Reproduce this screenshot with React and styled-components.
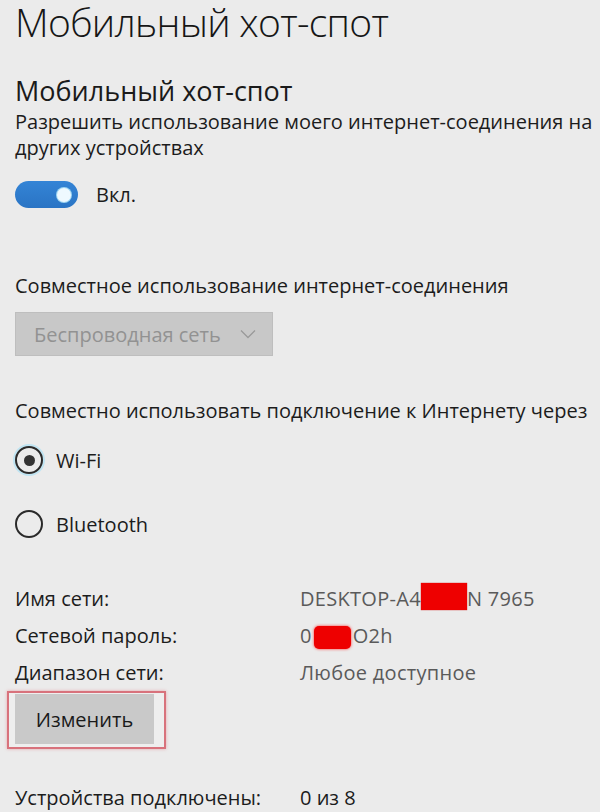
import React from "react";
import styled, { createGlobalStyle } from "styled-components";

const Global = createGlobalStyle`
  html, body { margin: 0; padding: 0; background: #ebebeb; }
  body { font-family: "Open Sans", "Noto Sans", sans-serif; color: #1c1c1c; }
`;

const Page = styled.div`
  width: 600px;
  height: 812px;
  overflow: hidden;
  background: #ebebeb;
  padding: 0 0 0 15px;
  box-sizing: border-box;
  display: flex;
  flex-direction: column;
`;

const Title = styled.h1`
  margin: 2px 0 0;
  font-weight: 300;
  font-size: 39px;
  line-height: 40px;
  letter-spacing: -0.7px;
  color: #161616;
  white-space: nowrap;
`;

const Subtitle = styled.h2`
  margin: 31px 0 0;
  font-weight: 400;
  font-size: 27px;
  line-height: 36px;
  color: #1a1a1a;
  white-space: nowrap;
`;

const Text = styled.p`
  margin: ${(p) => p.$mt || 0}px 0 0;
  font-size: 20px;
  line-height: 26px;
  color: #1c1c1c;
  white-space: ${(p) => (p.$wrap ? "normal" : "nowrap")};
  padding-right: ${(p) => (p.$wrap ? "2px" : "0")};
`;

const ToggleRow = styled.div`
  margin-top: 20px;
  display: flex;
  align-items: center;
  gap: 18px;
  height: 27px;
`;

const Track = styled.div`
  width: 63px;
  height: 27px;
  border-radius: 14px;
  background: linear-gradient(#3484d6, #2a74c4);
  display: flex;
  align-items: center;
  justify-content: flex-end;
  padding-right: 7px;
  box-sizing: border-box;
`;

const Knob = styled.span`
  width: 14px;
  height: 14px;
  border-radius: 50%;
  background: #eef9ff;
  box-shadow: 0 0 0 1px #9fd6f2;
`;

const Select = styled.div`
  margin-top: 13px;
  width: 258px;
  height: 44px;
  box-sizing: border-box;
  background: #c8c8c8;
  border: 1px solid #bebebe;
  display: flex;
  align-items: center;
  justify-content: space-between;
  padding: 0 16px 0 18px;
  font-size: 20px;
  color: #929292;
`;

const RadioRow = styled.div`
  margin-top: ${(p) => p.$mt}px;
  display: flex;
  align-items: center;
  gap: 13px;
  height: 28px;
  font-size: 20px;
  color: #1c1c1c;
`;

const RadioCircle = styled.span`
  width: 28px;
  height: 28px;
  box-sizing: border-box;
  border-radius: 50%;
  border: 2px solid #2a2a2a;
  display: flex;
  align-items: center;
  justify-content: center;
  box-shadow: ${(p) => (p.$checked ? "0 0 0 2px #bfe4f2" : "none")};
  &::after {
    content: "";
    display: ${(p) => (p.$checked ? "block" : "none")};
    width: 11px;
    height: 11px;
    border-radius: 50%;
    background: #333;
  }
`;

const InfoGrid = styled.div`
  margin-top: 42px;
  display: grid;
  grid-template-columns: 285px auto;
  font-size: 20px;
  line-height: 37px;
`;

const Label = styled.span`
  color: #1c1c1c;
  white-space: nowrap;
`;

const Value = styled.span`
  color: #5a5a5a;
  white-space: nowrap;
  display: flex;
  align-items: center;
  letter-spacing: 0.3px;
`;

const Redact = styled.span`
  display: inline-block;
  width: ${(p) => p.$w}px;
  height: ${(p) => p.$h}px;
  background: #ee0000;
  border-radius: ${(p) => (p.$soft ? "5px" : "0")};
  box-shadow: ${(p) => (p.$soft ? "0 0 3px #ff3030" : "0 0 1px #c00")};
  margin: ${(p) => p.$dy || 0}px ${(p) => p.$mx || 0}px 0;
`;

const Highlight = styled.div`
  margin: 0 0 0 -8px;
  width: 159px;
  height: 58px;
  box-sizing: border-box;
  border: 2px solid #d8727c;
  box-shadow: 0 0 3px rgba(230, 120, 130, 0.6);
  padding: 1px 10px 3px 6px;
  background: #eeeeee;
`;

const Button = styled.div`
  height: 100%;
  background: #c9c9c9;
  display: flex;
  align-items: center;
  justify-content: center;
  font-size: 20px;
  color: #1a1a1a;
`;

const Footer = styled.div`
  margin-top: 36px;
  display: grid;
  grid-template-columns: 285px auto;
  font-size: 20px;
  line-height: 26px;
  color: #1c1c1c;
  white-space: nowrap;
`;

const Chevron = () => (
  <svg width="16" height="10" viewBox="0 0 16 10" fill="none">
    <path d="M1 1.5 L8 8.5 L15 1.5" stroke="#9a9a9a" strokeWidth="1.3" />
  </svg>
);

export default function App() {
  return (
    <Page>
      <Global />
      <Title>Мобильный хот-спот</Title>
      <Subtitle>Мобильный хот-спот</Subtitle>
      <Text $wrap>Разрешить использование моего интернет-соединения на других устройствах</Text>
      <ToggleRow>
        <Track>
          <Knob />
        </Track>
        <Text>Вкл.</Text>
      </ToggleRow>
      <Text $mt={65}>Совместное использование интернет-соединения</Text>
      <Select>
        <span>Беспроводная сеть</span>
        <Chevron />
      </Select>
      <Text $mt={42}>Совместно использовать подключение к Интернету через</Text>
      <RadioRow $mt={22}>
        <RadioCircle $checked />
        <span>Wi-Fi</span>
      </RadioRow>
      <RadioRow $mt={36}>
        <RadioCircle />
        <span>Bluetooth</span>
      </RadioRow>
      <InfoGrid>
        <Label>Имя сети:</Label>
        <Value>
          DESKTOP-A4
          <Redact $w={46} $h={27} $dy={-4} />N 7965
        </Value>
        <Label>Сетевой пароль:</Label>
        <Value>
          0<Redact $w={37} $h={23} $dy={4} $mx={2} $soft />O2h
        </Value>
        <Label>Диапазон сети:</Label>
        <Value>Любое доступное</Value>
      </InfoGrid>
      <Highlight>
        <Button>Изменить</Button>
      </Highlight>
      <Footer>
        <span>Устройства подключены:</span>
        <span>0 из 8</span>
      </Footer>
    </Page>
  );
}
